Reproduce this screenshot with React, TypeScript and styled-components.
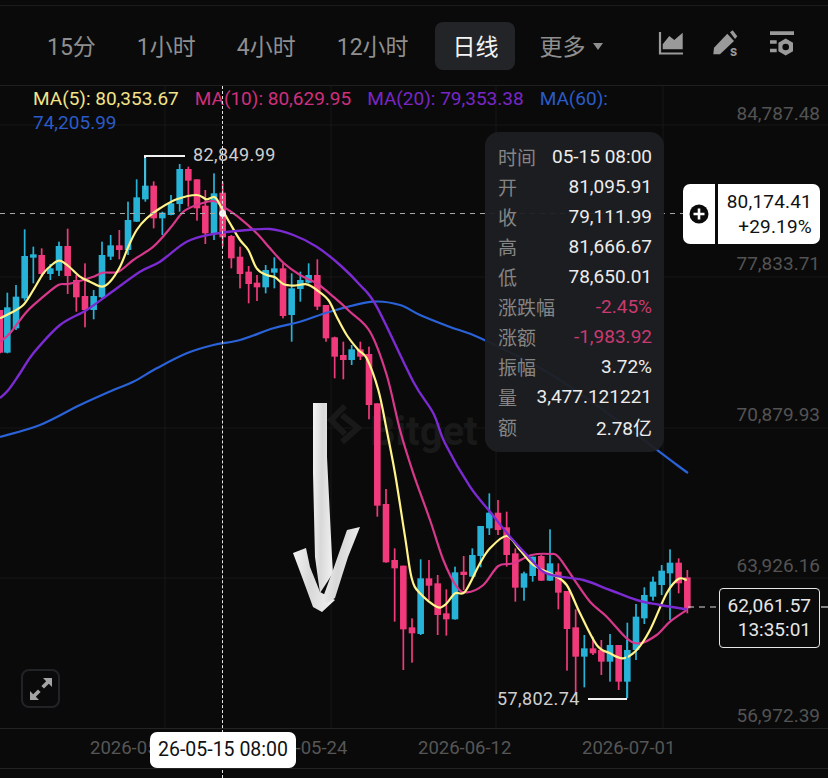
import React from "react";
import styled, { createGlobalStyle } from "styled-components";

const GlobalStyle = createGlobalStyle`
  html, body { margin: 0; padding: 0; background: #0a0a0a; }
  * { box-sizing: border-box; }
`;

const FONT = `Roboto, "Noto Sans CJK SC", sans-serif`;
const RED = "#f03a7c";
const TEAL = "#27b3d7";

const Page = styled.div`
  position: relative;
  width: 828px;
  height: 778px;
  overflow: hidden;
  display: flex;
  flex-direction: column;
  background: #0a0a0a;
  font-family: ${FONT};
`;

const Toolbar = styled.div`
  height: 81px;
  margin-top: 5px;
  padding: 12px 32px 0 29px;
  display: flex;
  align-items: flex-start;
  gap: 5px;
  border-top: 1px solid #1c1c1c;
  border-bottom: 1px solid #1f1f1f;
`;

const Tab = styled.div<{ $active?: boolean }>`
  height: 48px;
  margin-top: 4px;
  margin-left: ${(p) => (p.$active ? "3px" : "0")};
  margin-right: ${(p) => (p.$active ? "2px" : "0")};
  padding: ${(p) => (p.$active ? "0 16px 3px 18px" : "0 18px 3px")};
  display: flex;
  align-items: center;
  gap: 7px;
  border-radius: 8px;
  font-size: 23px;
  color: ${(p) => (p.$active ? "#f4f4f4" : "#8f8f8f")};
  background: ${(p) => (p.$active ? "#232427" : "transparent")};
`;

const Caret = styled.span`
  width: 0;
  height: 0;
  margin-top: 3px;
  border-left: 5px solid transparent;
  border-right: 5px solid transparent;
  border-top: 7px solid #8f8f8f;
`;

const ToolIcons = styled.div`
  margin-left: auto;
  margin-top: 10px;
  display: flex;
  align-items: center;
  gap: 27px;
  color: #9a9a9a;
`;

const Chart = styled.div`
  position: relative;
  height: 642px;
  flex: none;
`;

const ChartSvg = styled.svg`
  display: block;
`;

const Legend = styled.div`
  position: absolute;
  left: 33px;
  top: 1px;
  display: flex;
  flex-direction: column;
  font-size: 19px;
  line-height: 24px;
`;

const LegendLine = styled.div`
  display: flex;
  gap: 16px;
  white-space: nowrap;
`;

const LegendItem = styled.span<{ $color: string }>`
  color: ${(p) => p.$color};
`;

const AxisPrice = styled.div<{ $top: number }>`
  position: absolute;
  right: 8px;
  top: ${(p) => p.$top}px;
  font-size: 19px;
  line-height: 22px;
  color: #535353;
`;

const ExtremeLabel = styled.div<{ $left: number; $top: number }>`
  position: absolute;
  left: ${(p) => p.$left}px;
  top: ${(p) => p.$top}px;
  font-size: 18px;
  line-height: 22px;
  letter-spacing: 0.4px;
  color: #cfcfcf;
`;

const Tooltip = styled.div`
  position: absolute;
  left: 485px;
  top: 46px;
  width: 179px;
  height: 320px;
  padding: 10px 12px 10px 13px;
  display: flex;
  flex-direction: column;
  border-radius: 14px;
  background: rgba(30, 31, 34, 0.95);
  font-size: 19px;
`;

const TipRow = styled.div`
  height: 30px;
  padding-bottom: 2px;
  display: flex;
  align-items: center;
  justify-content: space-between;
  white-space: nowrap;
`;

const TipLabel = styled.span`
  color: #858585;
`;

const TipValue = styled.span<{ $down?: boolean }>`
  color: ${(p) => (p.$down ? "#c93a70" : "#ececec")};
`;

const CrossPrice = styled.div`
  position: absolute;
  left: 683px;
  top: 98px;
  width: 137px;
  height: 60px;
  display: flex;
  border-radius: 7px;
  background: #fff;
  color: #111;
`;

const CrossPlus = styled.div`
  width: 35px;
  display: flex;
  align-items: center;
  justify-content: center;
  border-right: 3px solid #0a0a0a;
`;

const CrossText = styled.div`
  flex: 1;
  padding-right: 8px;
  padding-top: 5px;
  font-size: 19px;
  line-height: 25px;
  letter-spacing: 0.2px;
  text-align: right;
`;

const LastPrice = styled.div`
  position: absolute;
  left: 719px;
  top: 502px;
  width: 101px;
  height: 60px;
  padding: 5px 8px 0 0;
  border: 1px solid #e6e6e6;
  border-radius: 4px;
  background: #0a0a0a;
  color: #e6e6e6;
  font-size: 19px;
  line-height: 24px;
  text-align: right;
`;

const ExpandButton = styled.div`
  position: absolute;
  left: 21px;
  top: 583px;
  width: 39px;
  height: 39px;
  display: flex;
  align-items: center;
  justify-content: center;
  border: 2px solid #222326;
  border-radius: 8px;
`;

const AxisRow = styled.div`
  position: relative;
  height: 41px;
  padding-left: 90px;
  padding-bottom: 2px;
  display: flex;
  align-items: center;
  gap: 71px;
  border-top: 1px solid #232323;
  border-bottom: 1px solid #232323;
`;

const AxisDate = styled.span`
  width: 93px;
  font-size: 18.5px;
  color: #565656;
  white-space: nowrap;
`;

const TimeBadge = styled.div`
  position: absolute;
  left: 150px;
  top: 3px;
  width: 146px;
  height: 36px;
  z-index: 2;
  padding-bottom: 2px;
  display: flex;
  align-items: center;
  justify-content: center;
  border-radius: 7px;
  background: #fff;
  color: #111;
  font-size: 19.5px;
`;

const CrossVertical = styled.div`
  position: absolute;
  left: 222px;
  top: 86px;
  bottom: 0;
  width: 0;
  border-left: 1.5px dashed #e8e8e8;
  z-index: 1;
`;

type C = [number, number, number, number, number, "r" | "b"];

const mapSet = (rows: C[], ox: number, oy: number): C[] =>
  rows.map(([x, a, b, c, d, k]) => [ox + x / 3, oy + a / 3, oy + b / 3, oy + c / 3, oy + d / 3, k]);

const candles: C[] = [
  ...mapSet(
    [
      [0, 510, 510, 638, 640, "r"], [22, 458, 502, 638, 640, "b"], [48, 435, 470, 565, 570, "b"],
      [74, 268, 348, 475, 482, "b"], [100, 320, 343, 353, 430, "b"], [125, 325, 345, 402, 410, "r"],
      [151, 372, 385, 402, 420, "b"], [177, 305, 318, 392, 408, "b"], [203, 266, 318, 408, 462, "r"],
      [229, 405, 420, 472, 515, "r"], [255, 370, 468, 510, 562, "r"], [281, 450, 468, 510, 538, "b"],
      [306, 305, 345, 472, 475, "b"], [332, 285, 316, 350, 360, "b"], [358, 270, 316, 330, 358, "r"],
      [384, 185, 240, 330, 345, "b"], [410, 118, 172, 245, 246, "b"], [436, 48, 137, 178, 185, "b"],
      [461, 124, 137, 235, 265, "r"], [487, 215, 218, 235, 285, "b"], [513, 165, 190, 225, 226, "b"],
      [539, 72, 87, 192, 215, "b"], [565, 80, 87, 122, 200, "r"], [591, 118, 118, 205, 242, "r"],
      [616, 150, 197, 280, 312, "r"], [642, 100, 160, 280, 300, "b"], [668, 125, 158, 292, 320, "r"],
      [694, 285, 288, 355, 385, "r"], [720, 320, 350, 402, 445, "r"], [746, 378, 395, 432, 490, "r"],
      [771, 405, 428, 442, 483, "r"], [797, 375, 390, 442, 460, "b"], [823, 352, 385, 398, 445, "b"],
      [849, 370, 385, 528, 535, "r"], [875, 400, 445, 525, 605, "b"], [901, 395, 420, 447, 485, "b"],
      [926, 370, 405, 428, 430, "b"], [952, 358, 405, 500, 510, "r"], [978, 495, 495, 595, 605, "r"],
      [1004, 590, 592, 650, 715, "r"], [1030, 605, 645, 660, 718, "r"], [1055, 615, 628, 660, 675, "b"],
      [1081, 605, 628, 650, 660, "r"],
    ],
    0,
    140
  ),
  ...mapSet(
    [
      [267, 20, 42, 195, 238, "r"], [292, 190, 190, 497, 530, "r"], [318, 447, 492, 667, 668, "r"],
      [344, 625, 660, 685, 845, "r"], [370, 677, 677, 868, 990, "r"], [396, 835, 862, 880, 968, "r"],
      [422, 658, 715, 882, 885, "b"], [447, 660, 715, 737, 780, "r"], [473, 705, 730, 825, 885, "r"],
      [499, 748, 820, 838, 887, "r"], [525, 680, 697, 838, 839, "b"], [551, 648, 695, 705, 750, "r"],
    ],
    280,
    340
  ),
  ...mapSet(
    [
      [7, 205, 225, 290, 292, "b"], [32, 138, 138, 228, 262, "b"], [58, 40, 98, 145, 165, "b"],
      [84, 60, 98, 150, 165, "r"], [110, 95, 142, 225, 260, "r"], [136, 205, 220, 323, 365, "r"],
      [162, 275, 280, 323, 362, "b"], [188, 230, 230, 288, 305, "b"], [214, 225, 228, 302, 303, "r"],
      [240, 148, 250, 302, 303, "b"], [265, 250, 275, 338, 388, "r"], [291, 333, 333, 447, 572, "r"],
      [317, 388, 442, 530, 640, "r"], [343, 465, 505, 530, 622, "b"], [369, 470, 505, 520, 525, "r"],
      [394, 480, 510, 545, 585, "r"], [420, 462, 495, 545, 605, "b"], [446, 495, 495, 605, 630, "r"],
      [472, 428, 510, 605, 655, "b"], [498, 372, 410, 510, 540, "b"], [523, 322, 345, 415, 432, "b"],
      [549, 290, 305, 350, 362, "b"], [575, 255, 272, 315, 345, "b"], [600, 208, 248, 280, 420, "b"],
      [626, 235, 248, 310, 340, "r"], [652, 270, 292, 385, 400, "r"],
    ],
    470,
    480
  ),
];

type P = [number, number];
const z2 = (r: P[]): P[] => r.map(([x, y]) => [x / 3, 140 + y / 3]);
const z4 = (r: P[]): P[] => r.map(([x, y]) => [280 + x / 3, 340 + y / 3]);
const z5 = (r: P[]): P[] => r.map(([x, y]) => [470 + x / 3, 480 + y / 3]);

const ma5: P[] = [
  ...z2([[0, 535], [30, 520], [70, 495], [100, 450], [130, 400], [155, 375], [178, 362], [205, 378], [240, 410], [270, 425], [305, 440], [330, 425], [360, 380], [385, 320], [410, 270], [440, 235], [480, 205], [530, 178], [590, 165], [620, 178], [645, 172], [665, 205], [690, 250], [720, 300], [745, 330], [770, 385], [800, 405], [825, 412], [850, 432], [880, 437], [920, 433], [950, 450], [985, 480], [1010, 530], [1040, 585], [1075, 630]]),
  ...z4([[260, 55], [295, 150], [320, 270], [345, 400], [375, 590], [395, 715], [420, 760], [470, 800], [495, 795], [525, 760], [555, 755]]),
  ...z5([[30, 250], [60, 205], [110, 168], [150, 210], [190, 255], [250, 285], [290, 315], [330, 400], [380, 495], [420, 520], [460, 535], [500, 510], [540, 450], [590, 340], [625, 297], [650, 300]]),
];
const ma10: P[] = [
  ...z2([[0, 605], [30, 580], [80, 515], [130, 470], [175, 435], [205, 432], [250, 420], [280, 410], [310, 398], [355, 395], [400, 360], [460, 320], [510, 265], [550, 215], [590, 195], [640, 183], [670, 200], [720, 235], [770, 280], [810, 325], [850, 368], [900, 405], [950, 430], [1000, 470], [1050, 515], [1110, 575]]),
  ...z4([[320, 105], [360, 270], [400, 400], [450, 540], [490, 660], [530, 740], [560, 757]]),
  ...z5([[40, 315], [85, 258], [130, 250], [185, 225], [240, 222], [265, 230], [310, 295], [360, 365], [410, 410], [470, 475], [510, 490], [560, 465], [600, 425], [650, 390]]),
];
const ma20: P[] = [
  [0, 398],
  ...z2([[25, 750], [60, 700], [100, 640], [180, 555], [260, 510], [330, 460], [420, 395], [480, 365], [560, 305], [640, 282], [720, 272], [810, 267], [880, 285], [950, 320], [1020, 375], [1080, 435], [1130, 500]]),
  ...z4([[400, 125], [460, 220], [495, 310]]),
  ...z5([[0, 20], [60, 95], [120, 170], [180, 235], [220, 275], [270, 290], [340, 300], [420, 330], [500, 360], [570, 375], [650, 388]]),
];
const ma60: P[] = [
  [0, 437], [40, 425], [80, 405],
  ...z2([[340, 750], [400, 725], [470, 685], [560, 640], [640, 615], [720, 600], [820, 565], [900, 545], [1000, 512], [1120, 485]]),
  [400, 305], [420, 315], [450, 327], [480, 338], [547, 372], [610, 415], [677, 465], [688, 473],
];

const smooth = (p: P[]): string => {
  let d = `M${p[0][0].toFixed(1)} ${p[0][1].toFixed(1)}`;
  for (let i = 0; i < p.length - 1; i++) {
    const a = p[Math.max(i - 1, 0)];
    const b = p[i];
    const c = p[i + 1];
    const e = p[Math.min(i + 2, p.length - 1)];
    const c1x = b[0] + (c[0] - a[0]) / 6;
    const c1y = b[1] + (c[1] - a[1]) / 6;
    const c2x = c[0] - (e[0] - b[0]) / 6;
    const c2y = c[1] - (e[1] - b[1]) / 6;
    d += `C${c1x.toFixed(1)} ${c1y.toFixed(1)} ${c2x.toFixed(1)} ${c2y.toFixed(1)} ${c[0].toFixed(1)} ${c[1].toFixed(1)}`;
  }
  return d;
};

const tipRows: [string, string, boolean?][] = [
  ["时间", "05-15 08:00"],
  ["开", "81,095.91"],
  ["收", "79,111.99"],
  ["高", "81,666.67"],
  ["低", "78,650.01"],
  ["涨跌幅", "-2.45%", true],
  ["涨额", "-1,983.92", true],
  ["振幅", "3.72%"],
  ["量", "3,477.121221"],
  ["额", "2.78亿"],
];

const prices: [string, number][] = [
  ["84,787.48", 17],
  ["77,833.71", 167],
  ["70,879.93", 318],
  ["63,926.16", 469],
  ["56,972.39", 619],
];

export default function App() {
  return (
    <>
      <GlobalStyle />
      <Page>
        <Toolbar>
          <Tab>15分</Tab>
          <Tab>1小时</Tab>
          <Tab>4小时</Tab>
          <Tab>12小时</Tab>
          <Tab $active>日线</Tab>
          <Tab>
            更多
            <Caret />
          </Tab>
          <ToolIcons>
            <svg width="27" height="26" viewBox="0 0 27 26" fill="currentColor">
              <path d="M2 2V23.5H25" fill="none" stroke="currentColor" strokeWidth="2.2" />
              <path d="M4.7 19.3V14.3L11.3 6L16.3 10L24.7 2.7V19.3Z" />
            </svg>
            <svg width="30" height="30" viewBox="0 -1 30 30" fill="currentColor">
              <path d="M2 18.7L15.3 4.7L22 12L8 25.3H1.3Z" />
              <path d="M18 3.3L20.7 1.3L25.3 7.3L23 10Z" />
              <text x="18" y="26.5" fontSize="14" fontWeight="700" fontFamily="Roboto, sans-serif">s</text>
            </svg>
            <svg width="27" height="27" viewBox="0 0 27 27" fill="currentColor">
              <path d="M1 1.3H25V5H1ZM1 10.3H7.7V13.7H1ZM1 18.7H7.7V22.3H1Z" />
              <path
                fillRule="evenodd"
                d="M16.7 8.5L24 12.7V21.3L16.7 25.5L9.4 21.3V12.7ZM16.7 13.7A3.3 3.3 0 1 0 16.7 20.3A3.3 3.3 0 1 0 16.7 13.7Z"
              />
            </svg>
          </ToolIcons>
        </Toolbar>
        <Chart>
          <ChartSvg width="828" height="642" viewBox="0 86 828 642">
            <defs>
              <linearGradient id="arrowFill" x1="0" y1="0" x2="1" y2="0.2">
                <stop offset="0" stopColor="#f4f4f4" />
                <stop offset="0.5" stopColor="#d8d8d8" />
                <stop offset="1" stopColor="#ededed" />
              </linearGradient>
            </defs>
            <g stroke="#171717" strokeWidth="1">
              {[165, 331, 496, 663].map((x) => (
                <line key={x} x1={x} y1={86} x2={x} y2={728} />
              ))}
              {[125, 277, 428, 578].map((y) => (
                <line key={y} x1={0} y1={y} x2={828} y2={y} />
              ))}
            </g>
            <g fill="none" stroke="#191919" strokeWidth="6">
              <path d="M345 406L331 420L345 434" />
              <path d="M342 415L358 428L342 442" />
            </g>
            <text x="370" y="445" fontSize="40" fontWeight="700" fontFamily="Roboto, sans-serif" fill="#191919">
              Bitget
            </text>
            {candles.map(([x, a, b, c, d, k], i) => {
              const col = k === "r" ? RED : TEAL;
              return (
                <g key={i} fill={col}>
                  <rect x={x - 0.85} y={a} width={1.7} height={d - a} />
                  <rect x={x - 3.3} y={b} width={6.6} height={Math.max(c - b, 2)} />
                </g>
              );
            })}
            <path d={smooth(ma60)} fill="none" stroke="#2a62d8" strokeWidth="2.2" />
            <path d={smooth(ma10)} fill="none" stroke="#d8388c" strokeWidth="2.2" />
            <path d={smooth(ma5)} fill="none" stroke="#fff38a" strokeWidth="2.2" />
            <path d={smooth(ma20)} fill="none" stroke="#7c2bd2" strokeWidth="2.4" />
            <path d="M145 190V156H185M588 699H627" fill="none" stroke="#f2f2f2" strokeWidth="2" />
            <line x1="145" y1="158" x2="145" y2="190" stroke={TEAL} strokeWidth="1.7" />
            <line x1="627" y1="640" x2="627" y2="698" stroke={TEAL} strokeWidth="1.7" />
            <line x1="0" y1="213.5" x2="684" y2="213.5" stroke="#a8a8a8" strokeWidth="1.2" strokeDasharray="5 5" />
            <line x1="688" y1="607" x2="719" y2="607" stroke="#d8d8d8" strokeWidth="1.2" strokeDasharray="6 5" />
            <line x1="821" y1="607" x2="828" y2="607" stroke="#d8d8d8" strokeWidth="1.2" />
            <circle cx="222.6" cy="213.5" r="3.4" fill="#f4f4f4" />
            <g fill="url(#arrowFill)">
              <path d="M313 403L327 403L327 457L332 557L333 573L320 593L315 557L313 473Z" />
              <path d="M293 553L306 548L310 567L320 592L335 600L322 612L313 607L302 577Z" />
              <path d="M347 530L360 527L348 557L335 598L327 603L322 600L333 570Z" />
            </g>
          </ChartSvg>
          <Legend>
            <LegendLine>
              <LegendItem $color="#f2e389">MA(5): 80,353.67</LegendItem>
              <LegendItem $color="#cf2f7e">MA(10): 80,629.95</LegendItem>
              <LegendItem $color="#7a26c6">MA(20): 79,353.38</LegendItem>
              <LegendItem $color="#2a5bc8">MA(60):</LegendItem>
            </LegendLine>
            <LegendLine>
              <LegendItem $color="#2a5bc8">74,205.99</LegendItem>
            </LegendLine>
          </Legend>
          {prices.map(([t, top]) => (
            <AxisPrice key={t} $top={top}>
              {t}
            </AxisPrice>
          ))}
          <ExtremeLabel $left={193} $top={58}>82,849.99</ExtremeLabel>
          <ExtremeLabel $left={497} $top={602}>57,802.74</ExtremeLabel>
          <Tooltip>
            {tipRows.map(([label, value, down]) => (
              <TipRow key={label}>
                <TipLabel>{label}</TipLabel>
                <TipValue $down={down}>{value}</TipValue>
              </TipRow>
            ))}
          </Tooltip>
          <CrossPrice>
            <CrossPlus>
              <svg width="20" height="20" viewBox="0 0 20 20">
                <circle cx="10" cy="10" r="9.5" fill="#0a0a0a" />
                <path d="M10 4.5V15.5M4.5 10H15.5" stroke="#fff" strokeWidth="2.6" />
              </svg>
            </CrossPlus>
            <CrossText>
              80,174.41
              <br />
              +29.19%
            </CrossText>
          </CrossPrice>
          <LastPrice>
            62,061.57
            <br />
            13:35:01
          </LastPrice>
          <ExpandButton>
            <svg width="24" height="24" viewBox="0 0 24 24" fill="#a4a4a4">
              <path d="M14 1H23V10L19.8 6.8L15 11.6L12.4 9L17.2 4.2Z" />
              <path d="M10 23H1V14L4.2 17.2L9 12.4L11.6 15L6.8 19.8Z" />
            </svg>
          </ExpandButton>
        </Chart>
        <AxisRow>
          <AxisDate>2026-05-05</AxisDate>
          <AxisDate>2026-05-24</AxisDate>
          <AxisDate>2026-06-12</AxisDate>
          <AxisDate>2026-07-01</AxisDate>
          <TimeBadge>26-05-15 08:00</TimeBadge>
        </AxisRow>
        <CrossVertical />
      </Page>
    </>
  );
}
